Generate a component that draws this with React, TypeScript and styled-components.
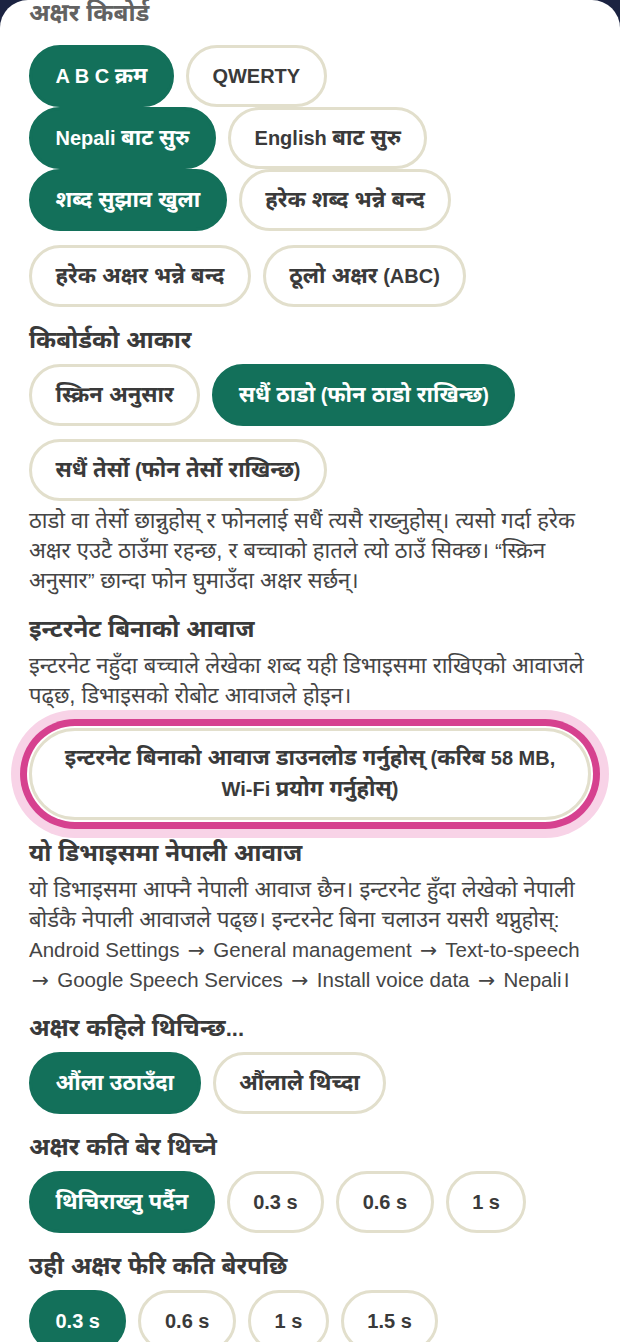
import React, { FC, ReactNode } from "react";
import styled, { createGlobalStyle } from "styled-components";

const COLORS = {
  page: "#1b2341",
  card: "#ffffff",
  green: "#13705a",
  chipBorder: "#e2dfcc",
  heading: "#3a3a3a",
  muted: "#626262",
  text: "#454545",
  ring: "#d6418f",
  glow: "#f8d3e7",
};

const FONT = `"Liberation Sans", Arial, "Noto Sans", sans-serif`;

const GlobalStyle = createGlobalStyle`
  html, body {
    margin: 0;
    padding: 0;
    background: ${COLORS.page};
  }
  body {
    font-family: ${FONT};
    -webkit-font-smoothing: antialiased;
  }
  * {
    box-sizing: border-box;
  }
`;

// the fallback Devanagari face runs small next to Arial, so Devanagari runs get bumped up;
// arrows get a wider face too
const RUNS = /([\u0900-\u097F\u200C\u200D]+(?:[\s,]+[\u0900-\u097F\u200C\u200D]+)*|→)/;

const T: FC<{ children: string }> = ({ children }) => {
  const parts = children.split(RUNS);
  const out: ReactNode[] = parts.map((part, i) => {
    if (i % 2 === 0) return part;
    return part === "→" ? <Arrow key={i}>{part}</Arrow> : <Deva key={i}>{part}</Deva>;
  });
  return <>{out}</>;
};

interface ChipOption {
  label: string;
  active?: boolean;
}

const keyboardGroups: ChipOption[][] = [
  [{ label: "A B C क्रम", active: true }, { label: "QWERTY" }],
  [{ label: "Nepali बाट सुरु", active: true }, { label: "English बाट सुरु" }],
  [{ label: "शब्द सुझाव खुला", active: true }, { label: "हरेक शब्द भन्ने बन्द" }],
];

const Option: FC<{ label: string; active?: boolean }> = ({ label, active }) => (
  <Chip $active={active}>
    <ChipLabel>
      <T>{label}</T>
    </ChipLabel>
  </Chip>
);

const App: FC = () => {
  return (
    <>
      <GlobalStyle />
      <Sheet>
        <SectionTitle $muted $first>
          <T>अक्षर किबोर्ड</T>
        </SectionTitle>
        {keyboardGroups.map((group, i) => (
          <ChipRow key={i}>
            {group.map((opt) => (
              <Option key={opt.label} label={opt.label} active={opt.active} />
            ))}
          </ChipRow>
        ))}
        <ChipRow $spaced>
          <Option label="हरेक अक्षर भन्ने बन्द" />
          <Option label="ठूलो अक्षर (ABC)" />
        </ChipRow>

        <SectionTitle>
          <T>किबोर्डको आकार</T>
        </SectionTitle>
        <ChipRow>
          <Option label="स्क्रिन अनुसार" />
          <Option label="सधैं ठाडो (फोन ठाडो राखिन्छ)" active />
          <Option label="सधैं तेर्सो (फोन तेर्सो राखिन्छ)" />
        </ChipRow>
        <Note>
          <T>
            {
              "ठाडो वा तेर्सो छान्नुहोस् र फोनलाई सधैं त्यसै राख्नुहोस्। त्यसो गर्दा हरेक अक्षर एउटै ठाउँमा रहन्छ, र बच्चाको हातले त्यो ठाउँ सिक्छ। “स्क्रिन अनुसार” छान्दा फोन घुमाउँदा अक्षर सर्छन्।"
            }
          </T>
        </Note>

        <SectionTitle>
          <T>इन्टरनेट बिनाको आवाज</T>
        </SectionTitle>
        <Note $tight>
          <T>
            {
              "इन्टरनेट नहुँदा बच्चाले लेखेका शब्द यही डिभाइसमा राखिएको आवाजले पढ्छ, डिभाइसको रोबोट आवाजले होइन।"
            }
          </T>
        </Note>
        <DownloadButton>
          <T>{"इन्टरनेट बिनाको आवाज डाउनलोड गर्नुहोस् (करिब 58 MB, Wi-Fi प्रयोग गर्नुहोस्)"}</T>
        </DownloadButton>

        <SectionTitle>
          <T>यो डिभाइसमा नेपाली आवाज</T>
        </SectionTitle>
        <Note $tight>
          <T>
            {
              "यो डिभाइसमा आफ्नै नेपाली आवाज छैन। इन्टरनेट हुँदा लेखेको नेपाली बोर्डकै नेपाली आवाजले पढ्छ। इन्टरनेट बिना चलाउन यसरी थप्नुहोस्: Android Settings → General management → Text-to-speech → Google Speech Services → Install voice data → Nepali।"
            }
          </T>
        </Note>

        <SectionTitle>
          <T>अक्षर कहिले थिचिन्छ...</T>
        </SectionTitle>
        <ChipRow>
          <Option label="औंला उठाउँदा" active />
          <Option label="औंलाले थिच्दा" />
        </ChipRow>

        <SectionTitle>
          <T>अक्षर कति बेर थिच्ने</T>
        </SectionTitle>
        <ChipRow>
          <Option label="थिचिराख्नु पर्दैन" active />
          <Option label="0.3 s" />
          <Option label="0.6 s" />
          <Option label="1 s" />
        </ChipRow>

        <SectionTitle>
          <T>उही अक्षर फेरि कति बेरपछि</T>
        </SectionTitle>
        <ChipRow>
          <Option label="0.3 s" active />
          <Option label="0.6 s" />
          <Option label="1 s" />
          <Option label="1.5 s" />
        </ChipRow>
      </Sheet>
    </>
  );
};

const Sheet = styled.div`
  background: ${COLORS.card};
  border-radius: 28px 28px 0 0;
  height: 1342px;
  overflow: hidden;
  padding: 0 29px;
`;

const Deva = styled.span`
  font-size: 1.1em;
  line-height: 1;
`;

const Arrow = styled.span`
  display: inline-block;
  width: 1.1em;
  text-align: center;
  font-family: "DejaVu Sans", sans-serif;
  font-weight: 400;
  line-height: 1;
`;

const SectionTitle = styled.h3<{ $muted?: boolean; $first?: boolean }>`
  margin: ${(p) => (p.$first ? "0 0 17px" : "20px 0 9px")};
  font-family: ${FONT};
  font-size: 22px;
  font-weight: 700;
  line-height: 28px;
  color: ${(p) => (p.$muted ? COLORS.muted : COLORS.heading)};
`;

const ChipRow = styled.div<{ $spaced?: boolean }>`
  display: flex;
  flex-wrap: wrap;
  column-gap: 12px;
  row-gap: 13px;
  margin-top: ${(p) => (p.$spaced ? "14px" : "0")};
`;

const Chip = styled.button<{ $active?: boolean }>`
  display: inline-flex;
  align-items: center;
  justify-content: center;
  height: 62px;
  padding: 0 23.5px;
  border-radius: 999px;
  border: 3px solid ${(p) => (p.$active ? COLORS.green : COLORS.chipBorder)};
  background: ${(p) => (p.$active ? COLORS.green : COLORS.card)};
  color: ${(p) => (p.$active ? "#ffffff" : COLORS.heading)};
  font-family: ${FONT};
  font-size: 20px;
  font-weight: 700;
  line-height: 30px;
  cursor: pointer;
`;

const ChipLabel = styled.span`
  white-space: nowrap;
`;

const Note = styled.p<{ $tight?: boolean }>`
  margin: ${(p) => (p.$tight ? "-2px 0 0" : "5px 0 0")};
  font-family: ${FONT};
  font-size: 20.5px;
  line-height: 30px;
  color: ${COLORS.text};

  ${Deva} {
    font-size: 1.075em;
  }
`;

const DownloadButton = styled.button`
  display: block;
  width: 100%;
  margin-top: 17px;
  padding: 12px 26px;
  border-radius: 999px;
  border: 3px solid ${COLORS.chipBorder};
  background: ${COLORS.card};
  color: ${COLORS.heading};
  font-family: ${FONT};
  font-size: 20px;
  font-weight: 700;
  line-height: 31px;
  text-align: center;
  box-shadow: 0 0 0 2px #ffffff, 0 0 0 9px ${COLORS.ring}, 0 0 0 18px ${COLORS.glow};
  cursor: pointer;
`;

export default App;
